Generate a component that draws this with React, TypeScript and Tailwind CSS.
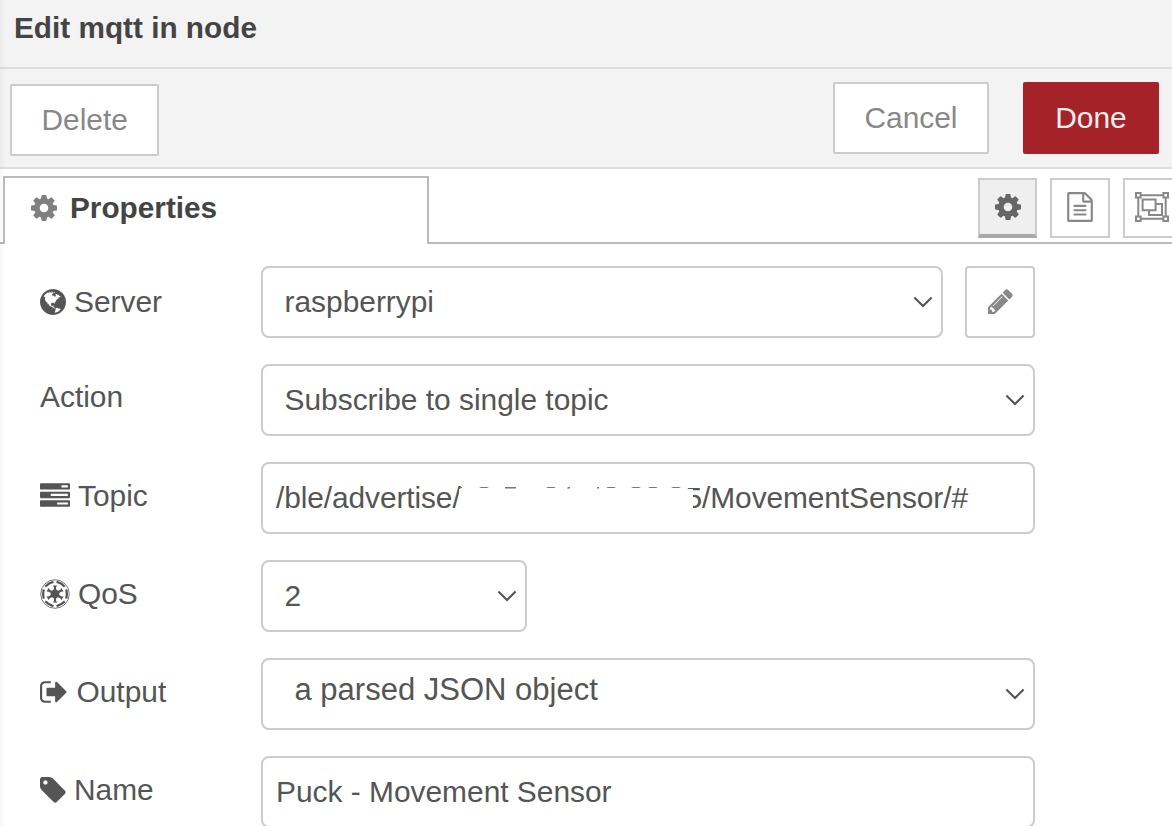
import type { ReactNode } from "react";

const paths = {
  cog: "M1152 896q0-106-75-181t-181-75-181 75-75 181 75 181 181 75 181-75 75-181zm512-109v222q0 12-8 23t-20 13l-185 28q-19 54-39 91 35 50 107 138 10 12 10 25t-9 23q-27 37-99 108t-94 71q-12 0-26-9l-138-108q-44 23-91 38-16 136-29 186-7 28-36 28h-222q-14 0-24.5-8.5t-11.5-21.5l-28-184q-49-16-90-37l-141 107q-10 9-25 9-14 0-25-11-126-114-165-168-7-10-7-23 0-12 8-23 15-21 51-66.5t54-70.5q-27-50-41-99l-183-27q-13-2-21-12.5t-8-23.5v-222q0-12 8-23t19-13l186-28q14-46 39-92-40-57-107-138-10-12-10-24 0-10 9-23 26-36 98.5-107.5t94.5-71.5q13 0 26 10l138 107q44-23 91-38 16-136 29-186 7-28 36-28h222q14 0 24.5 8.5t11.5 21.5l28 184q49 16 90 37l142-107q9-9 24-9 13 0 25 10 129 119 165 170 7 8 7 22 0 12-8 23-15 21-51 66.5t-54 70.5q26 50 41 98l183 28q13 2 21 12.5t8 23.5z",
  tag: "M576 448q0-53-37.5-90.5t-90.5-37.5-90.5 37.5-37.5 90.5 37.5 90.5 90.5 37.5 90.5-37.5 37.5-90.5zm1067 576q0 53-37 90l-491 492q-39 37-91 37-53 0-90-37l-715-716q-38-37-64.5-101t-26.5-117v-416q0-52 38-90t90-38h416q53 0 117 26.5t102 64.5l715 714q37 39 37 91z",
  signOut: "M704 1440q0 4 1 20t.5 26.5-3 23.5-10 19.5-20.5 6.5h-320q-119 0-203.5-84.5t-84.5-203.5v-704q0-119 84.5-203.5t203.5-84.5h320q13 0 22.5 9.5t9.5 22.5q0 4 1 20t.5 26.5-3 23.5-10 19.5-20.5 6.5h-320q-66 0-113 47t-47 113v704q0 66 47 113t113 47h312l11.5 1 11.5 3 8 5.5 7 9 2 13.5zm928-544q0 26-19 45l-544 544q-19 19-45 19t-45-19-19-45v-288h-448q-26 0-45-19t-19-45v-384q0-26 19-45t45-19h448v-288q0-26 19-45t45-19 45 19l544 544q19 19 19 45z",
  tasks: "M1024 1408h640v-128h-640v128zm-384-512h1024v-128h-1024v128zm640-512h384v-128h-384v128zm512 832v256q0 26-19 45t-45 19h-1664q-26 0-45-19t-19-45v-256q0-26 19-45t45-19h1664q26 0 45 19t19 45zm0-512v256q0 26-19 45t-45 19h-1664q-26 0-45-19t-19-45v-256q0-26 19-45t45-19h1664q26 0 45 19t19 45zm0-512v256q0 26-19 45t-45 19h-1664q-26 0-45-19t-19-45v-256q0-26 19-45t45-19h1664q26 0 45 19t19 45z",
  pencil: "M491 1536l91-91-235-235-91 91v107h128v128h107zm523-928q0-22-22-22-10 0-17 7l-542 542q-7 7-7 17 0 22 22 22 10 0 17-7l542-542q7-7 7-17zm-54-192l416 416-832 832h-416v-416zm683 96q0 53-37 90l-166 166-416-416 166-165q36-38 90-38 53 0 91 38l235 234q37 39 37 91z",
  fileText: "M1596 380q28 28 48 76t20 88v1152q0 40-28 68t-68 28h-1344q-40 0-68-28t-28-68v-1600q0-40 28-68t68-28h896q40 0 88 20t76 48zm-444-244v376h376q-10-29-22-41l-313-313q-12-12-41-22zm384 1528v-1024h-416q-40 0-68-28t-28-68v-416h-768v1536h1280zm-1024-864q0-14 9-23t23-9h704q14 0 23 9t9 23v64q0 14-9 23t-23 9h-704q-14 0-23-9t-9-23v-64zm736 224q14 0 23 9t9 23v64q0 14-9 23t-23 9h-704q-14 0-23-9t-9-23v-64q0-14 9-23t23-9h704zm0 256q14 0 23 9t9 23v64q0 14-9 23t-23 9h-704q-14 0-23-9t-9-23v-64q0-14 9-23t23-9h704z",
  globe: "M896 128q209 0 385.5 103t279.5 279.5 103 385.5-103 385.5-279.5 279.5-385.5 103-385.5-103-279.5-279.5-103-385.5 103-385.5 279.5-279.5 385.5-103zm274 521q-2 1-9.5 9.5t-13.5 9.5q2 0 4.5-5t5-11 3.5-7q6-7 22-15 14-6 52-12 34-8 51 11-2-2 9.5-13t14.5-12q3-2 15-4.5t15-7.5l2-22q-12 1-17.5-7t-6.5-21q0 2-6 8 0-7-4.5-8t-11.5 1-9 1q-10-3-15-7.5t-8-16.5-4-15q-2-5-9.5-11t-9.5-10q-1-2-2.5-5.5t-3-6.5-4-5.5-5.5-2.5-7 5-7.5 10-4.5 5q-3-2-6-1.5t-4.5 1-4.5 3-5 3.5q-3 2-8.5 3t-8.5 2q15-5-1-11-10-4-16-3 9-4 7.5-12t-8.5-14h5q-1-4-8.5-8.5t-17.5-8.5-13-6q-8-5-34-9.5t-33-.5q-5 6-4.5 10.5t4 14 3.5 12.5q1 6-5.5 13t-6.5 12q0 7 14 15.5t10 21.5q-3 8-16 16t-16 12q-5 8-1.5 18.5t10.5 16.5q2 2 1.5 4t-3.5 4.5-5.5 4-6.5 3.5l-3 2q-11 5-20.5-6t-13.5-26q-7-25-16-30-23-8-29 1-5-13-41-26-25-9-58-4 6-1 0-15-7-15-19-12 3-6 4-17.5t1-13.5q3-13 12-23 1-1 7-8.5t9.5-13.5.5-6q35 4 50-11 5-5 11.5-17t10.5-17q9-6 14-5.5t14.5 5.5 14.5 5q14 1 15.5-11t-7.5-20q12 1 3-17-4-7-8-9-12-4-27 5-8 4 2 8-1-1-9.5 10.5t-16.5 17.5-16-5q-1-1-5.5-13.5t-9.5-13.5q-8 0-16 15 3-8-11-15t-24-8q19-12-8-27-7-4-20.5-5t-19.5 4q-5 7-5.5 11.5t5 8 10.5 5.5 11.5 4 8.5 3q14 10 8 14-2 1-8.5 3.5t-11.5 4.5-6 4q-3 4 0 14t-2 14q-5-5-9-17.5t-7-16.5q7 9-25 6l-10-1q-4 0-16 2t-20.5 1-13.5-8q-4-8 0-20 1-4 4-2-4-3-11-9.5t-10-8.5q-46 15-94 41 6 1 12-1 5-2 13-6.5t10-5.5q34-14 42-7l5-5q14 16 20 25-7-4-30-1-20 6-22 12 7 12 5 18-4-3-11.5-10t-14.5-11-15-5q-16 0-22 1-146 80-235 222 7 7 12 8 4 1 5 9t2.5 11 11.5-3q9 8 3 19 1-1 44 27 19 17 21 21 3 11-10 18-1-2-9-9t-9-4q-3 5 .5 18.5t10.5 12.5q-7 0-9.5 16t-2.5 35.5-1 23.5l2 1q-3 12 5.5 34.5t21.5 19.5q-13 3 20 43 6 8 8 9 3 2 12 7.5t15 10 10 10.5q4 5 10 22.5t14 23.5q-2 6 9.5 20t10.5 23q-1 0-2.5 1t-2.5 1q3 7 15.5 14t15.5 13q1 3 2 10t3 11 8 2q2-20-24-62-15-25-17-29-3-5-5.5-15.5t-4.5-14.5q2 0 6 1.5t8.5 3.5 7.5 4 2 3q-3 7 2 17.5t12 18.5 17 19 12 13q6 6 14 19.5t0 13.5q9 0 20 10.5t17 19.5q5 8 8 26t5 24q2 7 8.5 13.5t12.5 9.5l16 8 13 7q5 2 18.5 10.5t21.5 11.5q10 4 16 4t14.5-2.5 13.5-3.5q15-2 29 15t21 21q36 19 55 11-2 1 .5 7.5t8 15.5 9 14.5 5.5 8.5q5 6 18 15t18 15q6-4 7-9-3 8 7 20t18 10q14-3 14-32-31 15-49-18 0-1-2.5-5.5t-4-8.5-2.5-8.5 0-7.5 5-3q9 0 10-3.5t-2-12.5-4-13q-1-8-11-20t-12-15q-5 9-16 8t-16-9q0 1-1.5 5.5t-1.5 6.5q-13 0-15-1 1-3 2.5-17.5t3.5-22.5q1-4 5.5-12t7.5-14.5 4-12.5-4.5-9.5-17.5-2.5q-19 1-26 20-1 3-3 10.5t-5 11.5-9 7q-7 3-24 2t-24-5q-13-8-22.5-29t-9.5-37q0-10 2.5-26.5t3-25-5.5-24.5q3-2 9-9.5t10-10.5q2-1 4.5-1.5t4.5 0 4-1.5 3-6q-1-1-4-3-3-3-4-3 7 3 28.5-1.5t27.5 1.5q15 11 22-2 0-1-2.5-9.5t-.5-13.5q5 27 29 9 3 3 15.5 5t17.5 5q3 2 7 5.5t5.5 4.5 5-.5 8.5-6.5q10 14 12 24 11 40 19 44 7 3 11 2t4.5-9.5 0-14-1.5-12.5l-1-8v-18l-1-8q-15-3-18.5-12t1.5-18.5 15-18.5q1-1 8-3.5t15.5-6.5 12.5-8q21-19 15-35 7 0 11-9-1 0-5-3t-7.5-5-4.5-2q9-5 2-16 5-3 7.5-11t7.5-10q9 12 21 2 8-8 1-16 5-7 20.5-10.5t18.5-9.5q7 2 8-2t1-12 3-12q4-5 15-9t13-5l17-11q3-4 0-4 18 2 31-11 10-11-6-20 3-6-3-9.5t-15-5.5q3-1 11.5-.5t10.5-1.5q15-10-7-16-17-5-43 12zm-163 877q206-36 351-189-3-3-12.5-4.5t-12.5-3.5q-18-7-24-8 1-7-2.5-13t-8-9-12.5-8-11-7q-2-2-7-6t-7-5.5-7.5-4.5-8.5-2-10 1l-3 1q-3 1-5.5 2.5t-5.5 3-4 3 0 2.5q-21-17-36-22-5-1-11-5.5t-10.5-7-10-1.5-11.5 7q-5 5-6 15t-2 13q-7-5 0-17.5t2-18.5q-3-6-10.5-4.5t-12 4.5-11.5 8.5-9 6.5-8.5 5.5-8.5 7.5q-3 4-6 12t-5 11q-2-4-11.5-6.5t-9.5-5.5q2 10 4 35t5 38q7 31-12 48-27 25-29 40-4 22 12 26 0 7-8 20.5t-7 21.5q0 6 2 16z",
};

// box: viewBox trimmed to each glyph's advance width
function Icon({ name, box, className }: { name: keyof typeof paths; box: string; className: string }) {
  return (
    <svg viewBox={box} fill="currentColor" className={`shrink-0 ${className}`}>
      <path d={paths[name]} />
    </svg>
  );
}

function ObjectGroup() {
  return (
    <svg viewBox="0 0 34 30" fill="none" stroke="currentColor" strokeWidth="2" className="h-[30px] w-[34px] shrink-0">
      <path d="M6 3.3h22M6 26.7h22M3.3 6v18M30.7 6v18" />
      <path d="M1 1h4.6v4.6H1zM28.4 1H33v4.6h-4.6zM1 24.4h4.6V29H1zM28.4 24.4H33V29h-4.6z" />
      <path d="M7.6 7.5h13v10.8h-13zM21 12h6v11H14v-4.2" />
    </svg>
  );
}

const spokes = [0, 60, 120, 180, 240, 300];

function Empire() {
  return (
    <svg viewBox="-15 -15 30 30" className="mr-2 h-[30px] w-[30px] shrink-0" fill="currentColor">
      <circle r="14.3" fill="none" stroke="currentColor" strokeWidth="0.8" />
      <circle r="4.4" />
      {spokes.map((angle) => (
        <g key={angle} transform={`rotate(${angle})`}>
          <path d="M-1.3-3.5-1-6.4-2-8.6h4L1-6.4 1.3-3.5z" />
          <path d="M10.2-4.6 12.4-4.8Q13.8 0 12.4 4.8L10.2 4.6Q11.4 0 10.2-4.6z" />
        </g>
      ))}
    </svg>
  );
}

function Chevron() {
  return (
    <svg viewBox="0 0 20 12" fill="none" stroke="#555" strokeWidth="2.1" className="h-3 w-5 shrink-0">
      <path d="M1.4 1.4 10 10l8.6-8.6" />
    </svg>
  );
}

function Row({ icon, label, labelClass, children }: { icon?: ReactNode; label: string; labelClass: string; children: ReactNode }) {
  return (
    <div className="flex h-[72px] shrink-0 items-center">
      <div className={`flex h-9 w-[221px] shrink-0 items-center ${labelClass}`}>
        {icon}
        <span>{label}</span>
      </div>
      {children}
    </div>
  );
}

const field = "flex h-[72px] items-center rounded-lg border-2 border-[#ccc] bg-white";

export default function App() {
  return (
    <div className="relative flex h-[826px] w-[1172px] flex-col overflow-hidden bg-white font-['Liberation_Sans',Arial,sans-serif] text-[29.9px] leading-9 text-[#555]">
      <header className="flex h-[69px] shrink-0 items-center border-b-2 border-[#ddd] bg-[#f3f3f3] pb-[11px] pl-[14px] text-[29.75px] font-bold text-[#444]">
        Edit mqtt in node
      </header>
      <div className="flex h-[100px] shrink-0 items-start border-b-2 border-[#ddd] bg-[#f3f3f3] pr-[13px] pl-[10px] text-[#888]">
        <button className="mt-[15px] h-[72px] w-[149.4px] rounded-[2px] border-2 border-[#ccc] bg-white pb-px">Delete</button>
        <div className="mt-[13px] ml-auto flex gap-[34px]">
          <button className="h-[72px] w-[156px] rounded-[2px] border-2 border-[#ccc] bg-white pb-px">Cancel</button>
          <button className="h-[72px] w-[136px] rounded-[2px] bg-[#a62229] pb-px text-[#eee]">Done</button>
        </div>
      </div>
      <div className="flex h-[75px] shrink-0">
        <div className="w-[3px] shrink-0 border-b-2 border-[#bbb]" />
        <div className="mt-[7px] flex w-[426px] shrink-0 items-center border-2 border-b-0 border-[#bbb] pb-[7px] pl-[26px] text-[29.75px] font-bold text-[#444]">
          <Icon name="cog" box="128 128 1536 1536" className="mr-[13px] h-[26px] w-[26px] text-[#808080]" />
          Properties
        </div>
        <div className="flex flex-1 justify-start gap-[13px] border-b-2 border-[#bbb] pt-[9px] pl-[549px] text-[#888]">
          <button className="flex h-[60px] w-[59px] shrink-0 items-center justify-center border-2 border-b-4 border-[#ccc] border-b-[#aaa] bg-[#efefef] text-[#666]">
            <Icon name="cog" box="128 128 1536 1536" className="h-[26px] w-[26px]" />
          </button>
          <button className="flex h-[60px] w-[60px] shrink-0 items-center justify-center border-2 border-[#ccc] bg-white pb-0.5">
            <Icon name="fileText" box="128 0 1536 1792" className="h-[30px] w-[26px]" />
          </button>
          <button className="-mr-4 flex h-[60px] w-[60px] shrink-0 items-center justify-center border-2 border-[#ccc] bg-white pr-0.5 pb-0.5">
            <ObjectGroup />
          </button>
        </div>
      </div>
      <main className="flex flex-col gap-[26.2px] pt-[21.5px] pl-10">
        <Row label="Server" labelClass="" icon={<Icon name="globe" box="128 128 1536 1536" className="mr-2 h-[26px] w-[26px]" />}>
          <div className={`${field} w-[682px] justify-between pr-2 pl-[21.5px]`}>
            raspberrypi
            <Chevron />
          </div>
          <button className="ml-[22px] flex h-[72px] w-[70px] items-center justify-center rounded-[4px] border-2 border-[#ccc] bg-white text-[#888]">
            <Icon name="pencil" box="128 128 1536 1536" className="h-[25px] w-[25px]" />
          </button>
        </Row>
        <Row label="Action" labelClass="mb-1.5">
          <div className={`${field} w-[774px] justify-between pr-2 pl-[21.5px]`}>
            Subscribe to single topic
            <Chevron />
          </div>
        </Row>
        <Row label="Topic" labelClass="mb-1" icon={<Icon name="tasks" box="0 0 1792 1792" className="mr-2 h-[30px] w-[30px]" />}>
          <div className={`${field} relative w-[774px] pl-[13px] tracking-[-0.1px]`}>
            <span>/ble/advertise/</span>
            <span className="ml-[225px]">5/MovementSensor/#</span>
            <div className="absolute top-[25px] left-[196px] h-[24px] w-[234px] bg-white" />
            <svg viewBox="0 0 234 2" className="absolute top-[23px] left-[196px] h-0.5 w-[234px]" fill="#777">
              <path d="M1 0h2v1H1zM22 0h6l2 1h-10zM46 0h11v1.4H46zM89 0h6l2 1H87zM109 0h2v1.4h-3zM138 0h2v1.4h-2zM149 0h6l2 1h-10zM174 0h6l2 1h-10zM191 0h6l2 1h-10zM214 0h6l2 1h-10z" />
            </svg>
          </div>
        </Row>
        <Row label="QoS" labelClass="mb-1" icon={<Empire />}>
          <div className={`${field} w-[266px] justify-between pr-2 pl-[21.5px]`}>
            2
            <Chevron />
          </div>
        </Row>
        <Row label="Output" labelClass="mb-1" icon={<Icon name="signOut" box="64 128 1568 1536" className="mr-[10px] h-[26px] w-[26.5px]" />}>
          <div className={`${field} w-[774px] justify-between pr-2 pl-[31.5px]`}>
            <span className="mb-2 text-[31px]">a parsed JSON object</span>
            <Chevron />
          </div>
        </Row>
        <Row label="Name" labelClass="mb-1" icon={<Icon name="tag" box="128 128 1536 1536" className="mr-2 h-[26px] w-[26px]" />}>
          <div className={`${field} w-[774px] pl-[13px]`}>Puck - Movement Sensor</div>
        </Row>
      </main>
      <div className="pointer-events-none absolute inset-y-0 left-0 w-1.5 bg-linear-to-r from-black/3 to-transparent" />
    </div>
  );
}
